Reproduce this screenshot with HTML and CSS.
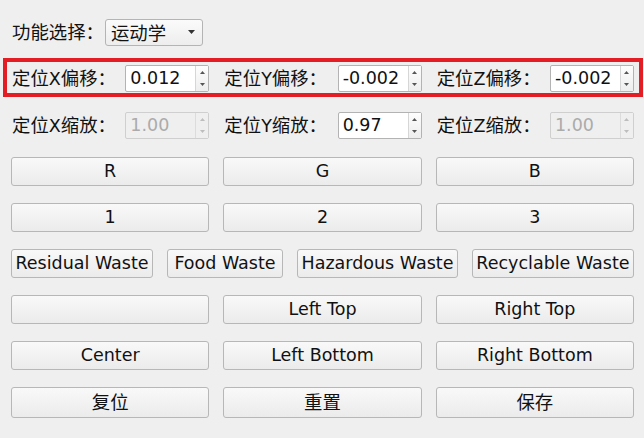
FILE: index.html
```html
<!DOCTYPE html>
<html lang="zh-CN">
<head>
<meta charset="utf-8">
<title>功能选择</title>
<link rel="stylesheet" href="styles.css">
</head>
<body>
<div class="page">
  <div class="row-combo">
    <span class="lbl"><span class="cjk">功能选择：</span></span>
    <div class="combo">
      <span class="combo-text cjk">运动学</span>
      <svg class="combo-arrow" width="7" height="4" viewBox="0 0 7 4"><path d="M0 0H7L3.5 4Z" fill="#333"/></svg>
    </div>
  </div>

  <div class="redbox">
    <div class="grid3">
      <div class="field">
        <span class="lbl"><span class="cjk">定位</span>X<span class="cjk">偏移：</span></span>
        <div class="spin"><span class="val">0.012</span><span class="arrows"><span class="half"><svg width="5" height="3" viewBox="0 0 5 3"><path d="M0 3H5L2.5 0Z"/></svg></span><span class="half"><svg width="5" height="3" viewBox="0 0 5 3"><path d="M0 0H5L2.5 3Z"/></svg></span></span></div>
      </div>
      <div class="field">
        <span class="lbl"><span class="cjk">定位</span>Y<span class="cjk">偏移：</span></span>
        <div class="spin"><span class="val">-0.002</span><span class="arrows"><span class="half"><svg width="5" height="3" viewBox="0 0 5 3"><path d="M0 3H5L2.5 0Z"/></svg></span><span class="half"><svg width="5" height="3" viewBox="0 0 5 3"><path d="M0 0H5L2.5 3Z"/></svg></span></span></div>
      </div>
      <div class="field">
        <span class="lbl"><span class="cjk">定位</span>Z<span class="cjk">偏移：</span></span>
        <div class="spin"><span class="val">-0.002</span><span class="arrows"><span class="half"><svg width="5" height="3" viewBox="0 0 5 3"><path d="M0 3H5L2.5 0Z"/></svg></span><span class="half"><svg width="5" height="3" viewBox="0 0 5 3"><path d="M0 0H5L2.5 3Z"/></svg></span></span></div>
      </div>
    </div>
  </div>

  <div class="grid3 row-scale">
    <div class="field">
      <span class="lbl"><span class="cjk">定位</span>X<span class="cjk">缩放：</span></span>
      <div class="spin dis"><span class="val">1.00</span><span class="arrows"><span class="half"><svg width="5" height="3" viewBox="0 0 5 3"><path d="M0 3H5L2.5 0Z"/></svg></span><span class="half"><svg width="5" height="3" viewBox="0 0 5 3"><path d="M0 0H5L2.5 3Z"/></svg></span></span></div>
    </div>
    <div class="field">
      <span class="lbl"><span class="cjk">定位</span>Y<span class="cjk">缩放：</span></span>
      <div class="spin"><span class="val">0.97</span><span class="arrows"><span class="half"><svg width="5" height="3" viewBox="0 0 5 3"><path d="M0 3H5L2.5 0Z"/></svg></span><span class="half"><svg width="5" height="3" viewBox="0 0 5 3"><path d="M0 0H5L2.5 3Z"/></svg></span></span></div>
    </div>
    <div class="field">
      <span class="lbl"><span class="cjk">定位</span>Z<span class="cjk">缩放：</span></span>
      <div class="spin dis"><span class="val">1.00</span><span class="arrows"><span class="half"><svg width="5" height="3" viewBox="0 0 5 3"><path d="M0 3H5L2.5 0Z"/></svg></span><span class="half"><svg width="5" height="3" viewBox="0 0 5 3"><path d="M0 0H5L2.5 3Z"/></svg></span></span></div>
    </div>
  </div>

  <div class="buttons">
    <button class="btn">R</button>
    <button class="btn">G</button>
    <button class="btn">B</button>
    <button class="btn">1</button>
    <button class="btn">2</button>
    <button class="btn">3</button>
    <div class="waste">
      <button class="btn w-res">Residual Waste</button>
      <button class="btn w-food">Food Waste</button>
      <button class="btn w-haz">Hazardous Waste</button>
      <button class="btn w-rec">Recyclable Waste</button>
    </div>
    <button class="btn"></button>
    <button class="btn">Left Top</button>
    <button class="btn">Right Top</button>
    <button class="btn">Center</button>
    <button class="btn">Left Bottom</button>
    <button class="btn">Right Bottom</button>
    <button class="btn last"><span class="cjk">复位</span></button>
    <button class="btn last"><span class="cjk">重置</span></button>
    <button class="btn last"><span class="cjk">保存</span></button>
  </div>
</div>
</body>
</html>
```

FILE: styles.css
```css
html, body {
  margin: 0;
  padding: 0;
}
body {
  width: 644px;
  height: 438px;
  overflow: hidden;
  background: #efefef;
  color: #111;
  font-family: "DejaVu Sans", "Noto Sans CJK SC", sans-serif;
  font-size: 17.5px;
}
.cjk {
  font-family: "Noto Sans CJK SC", sans-serif;
  font-size: 18.4px;
}
.page {
  padding: 19px 10px 0 11px;
}
.lbl {
  padding-left: 1px;
  white-space: nowrap;
  line-height: 27px;
}
.row-combo {
  display: flex;
  align-items: center;
  height: 27px;
  gap: 1px;
}
.combo {
  box-sizing: border-box;
  width: 98px;
  height: 27px;
  border: 1px solid #b4b4b4;
  border-radius: 3px;
  background: linear-gradient(#fbfbfb, #ededed);
  display: flex;
  align-items: center;
  justify-content: space-between;
  padding: 0 7px 0 5px;
}
.combo-text {
  line-height: 25px;
}
.combo-arrow {
  margin-bottom: 2px;
}
.redbox {
  margin: 12px -9px 0 -8px;
  border: 4px solid #e41c23;
  padding: 3px 5px 1px 4px;
}
.grid3 {
  display: grid;
  grid-template-columns: repeat(3, 1fr);
  column-gap: 14px;
}
.field {
  display: flex;
  align-items: center;
  justify-content: space-between;
  height: 27px;
}
.spin {
  box-sizing: border-box;
  width: 84px;
  height: 27px;
  border: 1px solid #b3b3b3;
  border-radius: 2px;
  background: #fff;
  display: flex;
  flex: none;
}
.val {
  flex: 1;
  padding-left: 4px;
  line-height: 25px;
  color: #111;
}
.arrows {
  width: 12px;
  border-left: 1px solid #d6d6d6;
  background: linear-gradient(#fdfdfd, #eeeeee);
  display: flex;
  flex-direction: column;
}
.half {
  flex: 1;
  display: flex;
  align-items: center;
  justify-content: center;
}
.half svg path {
  fill: #555;
}
.spin.dis {
  background: #efefef;
  border-color: #cfcfcf;
}
.spin.dis .val {
  color: #ababab;
}
.spin.dis .arrows {
  background: #efefef;
  border-left-color: #dcdcdc;
}
.spin.dis .half svg path {
  fill: #bdbdbd;
}
.row-scale {
  margin-top: 15px;
}
.buttons {
  margin-top: 18px;
  display: grid;
  grid-template-columns: repeat(3, 1fr);
  grid-auto-rows: 29px;
  column-gap: 14px;
  row-gap: 17px;
}
.btn {
  box-sizing: border-box;
  height: 29px;
  margin: 0;
  padding: 0;
  border: 1px solid #b7b7b7;
  border-radius: 3px;
  background: linear-gradient(#f9f9f9, #ebebeb);
  font-family: inherit;
  font-size: inherit;
  color: #111;
  white-space: nowrap;
  line-height: 27px;
  overflow: hidden;
}
.btn.last {
  height: 31px;
}
.waste {
  grid-column: 1 / -1;
  display: flex;
  justify-content: space-between;
}
.w-res { flex: 0 0 142px; }
.w-food { flex: 0 0 116px; }
.w-haz { flex: 0 0 161px; }
.w-rec { flex: 0 0 162px; }
```
